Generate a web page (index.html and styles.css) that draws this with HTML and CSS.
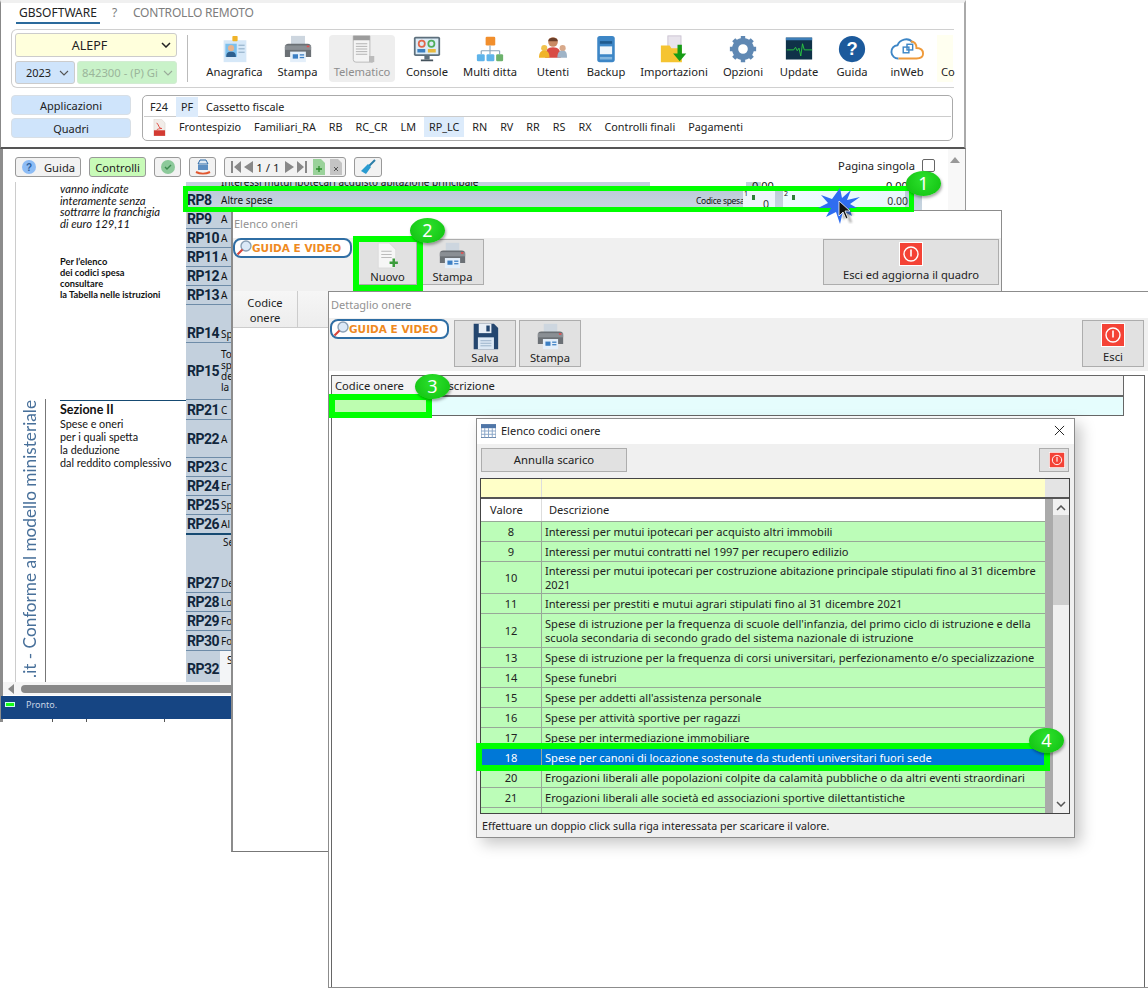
FILE: index.html
```html
<!DOCTYPE html>
<html lang="it">
<head>
<meta charset="utf-8">
<title>GBsoftware - Quadro RP</title>
<link rel="stylesheet" href="styles.css">
</head>
<body>
<svg class="defs" width="0" height="0" aria-hidden="true">
  <symbol id="i-printer" viewBox="0 0 32 32">
    <rect x="8" y="1" width="16" height="10" fill="#cdd6df"/>
    <path d="M1 14a4 4 0 0 1 4-4h22a4 4 0 0 1 4 4v11H1z" fill="#6b7075"/>
    <rect x="1" y="12" width="30" height="5" fill="#8a8f94"/>
    <rect x="26" y="12" width="3" height="2" fill="#e05050"/>
    <rect x="7" y="19" width="18" height="12" fill="#e4effa"/>
    <rect x="10" y="22" width="6" height="5" fill="#3b7fc4"/>
    <rect x="18" y="22" width="5" height="1.5" fill="#3b7fc4"/>
    <rect x="18" y="25" width="5" height="1.5" fill="#3b7fc4"/>
  </symbol>
  <symbol id="i-exit" viewBox="0 0 24 24">
    <rect x="0.5" y="0.5" width="23" height="23" fill="#f44336" stroke="#fff"/>
    <circle cx="12" cy="12" r="7" fill="none" stroke="#fff" stroke-width="1.4"/>
    <rect x="11.2" y="7.5" width="1.6" height="7" fill="#fff"/>
  </symbol>
  <symbol id="i-loupe" viewBox="0 0 16 16">
    <circle cx="10" cy="6" r="5" fill="#dbe9f7" stroke="#8aa0b5" stroke-width="1.4"/>
    <path d="M6.5 9.5 1.5 14.5" stroke="#d9453a" stroke-width="2.2"/>
  </symbol>
</svg>

<section class="app">
  <nav class="menu">
    <span class="menu-item active">GBSOFTWARE</span>
    <span class="menu-item muted">?</span>
    <span class="menu-item muted">CONTROLLO REMOTO</span>
  </nav>
  <div class="ribbon">
    <div class="pickers">
      <div class="select yellow"><span class="select-text">ALEPF</span><svg class="chev" viewBox="0 0 10 6"><path d="M1 1l4 4 4-4" fill="none" stroke="#222" stroke-width="1.5"/></svg></div>
      <div class="picker-row">
        <div class="select blue"><span class="select-text">2023</span><svg class="chev" viewBox="0 0 10 6"><path d="M1 1l4 4 4-4" fill="none" stroke="#555" stroke-width="1.1"/></svg></div>
        <div class="select green"><span class="select-text">842300 - (P) Gi</span><svg class="chev" viewBox="0 0 10 6"><path d="M1 1l4 4 4-4" fill="none" stroke="#9a9" stroke-width="1.1"/></svg></div>
      </div>
    </div>
    <div class="tools">
      <div class="tool">
        <svg viewBox="0 0 32 32"><rect x="3" y="6" width="26" height="25" fill="#d6e8f8"/><rect x="13" y="1" width="6" height="6" rx="1" fill="#f0b429"/><rect x="5" y="10" width="13" height="15" fill="#7cc0ee"/><circle cx="11.500" cy="15" r="3.500" fill="#e7b48f"/><path d="M6 25c0-5 2-6 5.500-6s5.500 1 5.500 6z" fill="#2d5f8f"/><rect x="20" y="11" width="7" height="1.500" fill="#9db8d0"/><rect x="20" y="15" width="7" height="1.500" fill="#9db8d0"/><rect x="20" y="19" width="7" height="1.500" fill="#9db8d0"/></svg>
        <span>Anagrafica</span>
      </div>
      <div class="tool"><svg viewBox="0 0 32 32"><use href="#i-printer"/></svg><span>Stampa</span></div>
      <div class="tool disabled">
        <svg viewBox="0 0 32 32"><path d="M6 1h19v27a3 3 0 0 0 3 3H9a3 3 0 0 1-3-3z" fill="#f4f4f4" stroke="#b5b5b5"/><rect x="6" y="1" width="19" height="5" fill="#9c9c9c"/><path d="M9 10h13M9 13h13M9 16h13M9 19h13M9 22h13" stroke="#aaa"/><rect x="24" y="24" width="6" height="7" fill="#bbb"/></svg>
        <span>Telematico</span>
      </div>
      <div class="tool">
        <svg viewBox="0 0 32 32"><rect x="1" y="2" width="30" height="22" rx="2" fill="#5d6f7c"/><rect x="3" y="4" width="26" height="18" fill="#dcecf7"/><circle cx="10" cy="10" r="3.500" fill="none" stroke="#e2684c" stroke-width="2"/><circle cx="21" cy="10" r="3.500" fill="none" stroke="#4fae5b" stroke-width="2"/><rect x="5" y="16" width="9" height="4" fill="#3c80c0"/><rect x="17" y="16" width="9" height="4" fill="#e9b93d"/><rect x="13" y="24" width="6" height="4" fill="#5d6f7c"/><rect x="9" y="28" width="14" height="2" fill="#44525c"/></svg>
        <span>Console</span>
      </div>
      <div class="tool">
        <svg viewBox="0 0 32 32"><rect x="11" y="2" width="11" height="10" rx="1.500" fill="#f18e2c"/><path d="M16 12v6M6 18h21M6 18v4M16 18v4M27 18v4" fill="none" stroke="#8aa5bb" stroke-width="1.300"/><rect x="1" y="22" width="9" height="8" rx="1.500" fill="#5fb4ea"/><rect x="12" y="22" width="9" height="8" rx="1.500" fill="#5fb4ea"/><rect x="23" y="22" width="8" height="8" rx="1.500" fill="#6cb26c"/></svg>
        <span>Multi ditta</span>
      </div>
      <div class="tool">
        <svg viewBox="0 0 32 32"><circle cx="16" cy="8" r="5.500" fill="#c98a63"/><path d="M10.500 7c0-5 11-5 11 0z" fill="#6b3f2a"/><path d="M7 26c0-9 3-12 9-12s9 3 9 12z" fill="#d84b45"/><circle cx="6" cy="15" r="3.500" fill="#f0c24b"/><path d="M0 26c0-6 2-8 6-8s6 2 6 8z" fill="#f0b429"/><circle cx="27" cy="15" r="3.500" fill="#d8a98a"/><path d="M21 26c0-6 2-8 6-8s5 2 5 8z" fill="#9fb4c7"/></svg>
        <span>Utenti</span>
      </div>
      <div class="tool">
        <svg viewBox="0 0 32 32"><rect x="6" y="1" width="20" height="30" rx="3" fill="#3d86c6"/><rect x="9" y="7" width="14" height="3" fill="#1f5a8e"/><rect x="9" y="13" width="14" height="9" fill="#f0f6fb"/><rect x="9" y="25" width="14" height="3" fill="#84b6de"/></svg>
        <span>Backup</span>
      </div>
      <div class="tool">
        <svg viewBox="0 0 32 32"><rect x="9" y="1" width="15" height="18" fill="#e8e4ec" stroke="#c8c0d0"/><path d="M1 12h10l2 3h12v16H1z" fill="#f5c431"/><path d="M20 11h5v10h5l-7.500 9-7.500-9h5z" fill="#169c16"/></svg>
        <span>Importazioni</span>
      </div>
      <div class="tool">
        <svg viewBox="0 0 32 32"><circle cx="16" cy="16" r="9" fill="none" stroke="#5f88b3" stroke-width="7"/><path d="M16 1v6M16 25v6M1 16h6M25 16h6M5.400 5.400l4.200 4.200M22.400 22.400l4.200 4.200M5.400 26.600l4.200-4.200M22.400 9.600l4.200-4.200" stroke="#5f88b3" stroke-width="5"/></svg>
        <span>Opzioni</span>
      </div>
      <div class="tool">
        <svg viewBox="0 0 32 32"><rect x="1" y="3" width="30" height="25" fill="#0f3248"/><rect x="1" y="3" width="30" height="3" fill="#3d7eb8"/><path d="M2 17h8l2-3 2 4 2-3 2 9 2-14 2 7h9" fill="none" stroke="#29c63f" stroke-width="1.100"/></svg>
        <span>Update</span>
      </div>
      <div class="tool">
        <svg viewBox="0 0 32 32"><circle cx="16" cy="16" r="15" fill="#1c5a9c"/><text x="16" y="23" class="qmark">?</text></svg>
        <span>Guida</span>
      </div>
      <div class="tool">
        <svg class="wide-ico" viewBox="0 0 36 28"><path d="M9 24a7 7 0 0 1-1-14C10 4 19 1 24 7" fill="none" stroke="#3d86c6" stroke-width="2"/><path d="M22 6c4 0 6 3 6 7 4 0 7 2 7 6s-3 5-7 5H9" fill="none" stroke="#ef9a3a" stroke-width="2"/><rect x="14" y="12" width="6" height="6" fill="none" stroke="#3d86c6" stroke-width="1.500"/><rect x="18" y="9" width="6" height="6" fill="none" stroke="#3d86c6" stroke-width="1.500"/></svg>
        <span>inWeb</span>
      </div>
      <div class="tool clipped"><span>Co</span></div>
    </div>
  </div>
  <div class="nav-band">
    <div class="side-buttons">
      <div class="side-btn">Applicazioni</div>
      <div class="side-btn">Quadri</div>
    </div>
    <div class="tabs">
      <div class="tab-row top">
        <span class="tab">F24</span>
        <span class="tab on">PF</span>
        <span class="tab">Cassetto fiscale</span>
      </div>
      <div class="tab-row">
        <svg class="pdf" viewBox="0 0 14 18"><path d="M1 0h8l4 4v14H1z" fill="#f1ece8" stroke="#d5ccc6" stroke-width=".5"/><path d="M4 4c3 3 2 6 5 6s-5 0-5 2" fill="none" stroke="#e0433a"/><rect x="1" y="12" width="12" height="6" fill="#d33b32"/></svg>
        <span class="tab">Frontespizio</span>
        <span class="tab">Familiari_RA</span>
        <span class="tab">RB</span>
        <span class="tab">RC_CR</span>
        <span class="tab">LM</span>
        <span class="tab on">RP_LC</span>
        <span class="tab">RN</span>
        <span class="tab">RV</span>
        <span class="tab">RR</span>
        <span class="tab">RS</span>
        <span class="tab">RX</span>
        <span class="tab">Controlli finali</span>
        <span class="tab">Pagamenti</span>
      </div>
    </div>
  </div>
</section>

<section class="doc">
  <div class="doc-bar">
    <div class="btn guida"><svg class="ico16" viewBox="0 0 16 16"><circle cx="8" cy="8" r="7" fill="#8dbcf5"/><text x="8" y="11.500" class="qmark small">?</text></svg>Guida</div>
    <div class="btn controlli">Controlli</div>
    <div class="btn icon-btn"><svg class="ico16" viewBox="0 0 16 16"><circle cx="8" cy="8" r="7" fill="#8cc99a"/><path d="M5 8l2 2 4-4" fill="none" stroke="#3c8a4f" stroke-width="1.400"/></svg></div>
    <div class="btn icon-btn"><svg class="ico16" viewBox="0 0 16 16"><path d="M5 1h6l2 4H3z" fill="#dfe9f3" stroke="#2d6aa8"/><path d="M3 6h10v5H3z" fill="#5d8fc2"/><path d="M1 13c4 2 10 2 14 0" fill="none" stroke="#e2582f" stroke-width="2"/></svg></div>
    <div class="btn pager">
      <svg class="pg" viewBox="0 0 12 14"><path d="M1 1h2v12H1zM11 1v12L4 7z" fill="#888"/></svg>
      <svg class="pg" viewBox="0 0 12 14"><path d="M11 1v12L2 7z" fill="#888"/></svg>
      <span class="pg-text">1 / 1</span>
      <svg class="pg" viewBox="0 0 12 14"><path d="M1 1v12l9-6z" fill="#888"/></svg>
      <svg class="pg" viewBox="0 0 12 14"><path d="M9 1h2v12H9zM1 1v12l7-6z" fill="#888"/></svg>
      <svg class="pg doc-ico" viewBox="0 0 12 16"><path d="M0 0h8l4 4v12H0z" fill="#9ad29a"/><path d="M6 7v6M3 10h6" stroke="#2c8a2c" stroke-width="1.300"/></svg>
      <svg class="pg doc-ico" viewBox="0 0 12 16"><path d="M0 0h8l4 4v12H0z" fill="#c4c4c4"/><path d="M4 8l4 4M8 8l-4 4" stroke="#555"/></svg>
    </div>
    <div class="btn icon-btn wide"><svg class="ico16" viewBox="0 0 16 16"><path d="M15 1 8 8" stroke="#2a7ea8" stroke-width="2"/><path d="M8 5l3 3-5 7-5-3z" fill="#2a9bd0"/></svg></div>
    <label class="single">Pagina singola<span class="checkbox"></span></label>
  </div>

  <div class="sheet">
    <div class="rail"></div>
    <div class="spine">
      <div class="spine-top"></div>
      <div class="spine-low"><span class="vert">.it - Conforme al modello ministeriale</span></div>
    </div>
    <div class="notes">
      <p class="note italic">vanno indicate<br>interamente senza<br>sottrarre la franchigia<br>di euro 129,11</p>
      <p class="note tight">Per l’elenco<br>dei codici spesa<br>consultare<br>la Tabella nelle istruzioni</p>
      <div class="section2">
        <strong>Sezione II</strong>
        <p>Spese e oneri<br>per i quali spetta<br>la deduzione<br>dal reddito complessivo</p>
      </div>
    </div>
    <div class="codes">
      <div class="rp h7 rp7"><span class="rp-cut">Interessi mutui ipotecari acquisto abitazione principale</span><span class="cut-num n1">0.00</span><span class="cut-num n2">0.00</span></div>
      <div class="rp h21 rp8">
        <b>RP8</b><span class="lbl">Altre spese</span>
        <span class="cs">Codice spesa</span>
        <span class="fld f1"><i>1</i><u></u><em>0</em></span>
        <span class="fld f2"><i>2</i><u></u><em>0.00</em></span>
      </div>
      <div class="rp h19"><b>RP9</b><span class="lbl">A</span></div>
      <div class="rp h19"><b>RP10</b><span class="lbl">A</span></div>
      <div class="rp h19"><b>RP11</b><span class="lbl">A</span></div>
      <div class="rp h19"><b>RP12</b><span class="lbl">A</span></div>
      <div class="rp h19"><b>RP13</b><span class="lbl">A</span></div>
      <div class="rp h38 low"><b>RP14</b><span class="lbl">Sp</span></div>
      <div class="rp h57"><b>RP15</b><span class="lbl multi">To<br>sp<br>de<br>la</span></div>
      <div class="rp h20"><b>RP21</b><span class="lbl">C</span></div>
      <div class="rp h38"><b>RP22</b><span class="lbl">A</span></div>
      <div class="rp h19"><b>RP23</b><span class="lbl">C</span></div>
      <div class="rp h19"><b>RP24</b><span class="lbl">Er</span></div>
      <div class="rp h19"><b>RP25</b><span class="lbl">Sp</span></div>
      <div class="rp h20 thick"><b>RP26</b><span class="lbl">Al</span></div>
      <div class="rp h39 plain"><span class="se">Se</span></div>
      <div class="rp h19"><b>RP27</b><span class="lbl">De</span></div>
      <div class="rp h19"><b>RP28</b><span class="lbl">Lo</span></div>
      <div class="rp h19"><b>RP29</b><span class="lbl">Fo</span></div>
      <div class="rp h20"><b>RP30</b><span class="lbl">Fo</span></div>
      <div class="rp h31 plain rp32"><b>RP32</b><span class="rp32-box">S</span></div>
    </div>
  </div>

  <div class="hscroll">
    <svg class="left-arrow" viewBox="0 0 6 10"><path d="M0 5l6-5v10z" fill="#888"/></svg>
    <div class="thumb"></div>
  </div>
  <div class="status"><span class="led"></span>Pronto.</div>
  <div class="ticks"><span></span><span></span><span></span></div>
  <div class="vscroll"><svg viewBox="0 0 10 6"><path d="M5 0l5 6H0z" fill="#999"/></svg></div>
</section>

<section class="win win-a">
  <header class="win-title muted-title">Elenco oneri</header>
  <div class="win-bar">
    <div class="video"><svg viewBox="0 0 16 16"><use href="#i-loupe"/></svg>GUIDA E VIDEO</div>
    <div class="big-btn nuovo">
      <svg viewBox="0 0 26 26"><path d="M4 1h11l6 6v18H4z" fill="#f6f6f6" stroke="#dcdcdc"/><path d="M7 9h10M7 12h10M7 15h10" stroke="#bbb"/><path d="M19 16v8M15 20h8" stroke="#3b9c3b" stroke-width="2.400"/></svg>
      <span>Nuovo</span>
    </div>
    <div class="big-btn"><svg viewBox="0 0 32 32"><use href="#i-printer"/></svg><span>Stampa</span></div>
    <div class="big-btn esci-wide"><svg class="exit" viewBox="0 0 24 24"><use href="#i-exit"/></svg><span>Esci ed aggiorna il quadro</span></div>
  </div>
  <div class="a-head">
    <div class="a-col1">Codice<br>onere</div>
    <div class="a-col2"></div>
  </div>
</section>

<section class="win win-b">
  <header class="win-title muted-title">Dettaglio onere</header>
  <div class="win-bar bar-b">
    <div class="video"><svg viewBox="0 0 16 16"><use href="#i-loupe"/></svg>GUIDA E VIDEO</div>
    <div class="big-btn">
      <svg viewBox="0 0 32 32"><path d="M2 1h24l5 5v25H2z" fill="#24466f"/><rect x="8" y="1" width="15" height="11" fill="#e8eef5"/><rect x="17" y="3" width="4" height="7" fill="#24466f"/><rect x="7" y="17" width="19" height="14" fill="#dce8f4"/><path d="M10 21h13M10 24h13M10 27h13" stroke="#8fa8c2"/></svg>
      <span>Salva</span>
    </div>
    <div class="big-btn"><svg viewBox="0 0 32 32"><use href="#i-printer"/></svg><span>Stampa</span></div>
    <div class="big-btn esci-small"><svg class="exit" viewBox="0 0 24 24"><use href="#i-exit"/></svg><span>Esci</span></div>
  </div>
  <div class="b-frame">
    <div class="b-table">
      <div class="b-head"><span class="b-c1">Codice onere</span><span>Descrizione</span></div>
      <div class="b-row"><span class="b-cell"></span></div>
    </div>
  </div>
</section>

<section class="win win-c">
  <header class="win-title dark-title">
    <svg class="cal" viewBox="0 0 16 14"><rect width="16" height="14" fill="#fff" stroke="#5f7fa8"/><rect width="16" height="4" fill="#4f76a8"/><path d="M0 7h16M0 10.500h16M4 4v10M8 4v10M12 4v10" stroke="#86a3c6"/></svg>
    <span>Elenco codici onere</span>
    <svg class="close" viewBox="0 0 12 12"><path d="M1 1l10 10M11 1 1 11" stroke="#111" stroke-width="1"/></svg>
  </header>
  <div class="c-body">
    <div class="c-tools">
      <div class="c-annulla">Annulla scarico</div>
      <div class="c-exit"><svg viewBox="0 0 24 24"><use href="#i-exit"/></svg></div>
    </div>
    <div class="c-table">
      <div class="c-filter"><span class="c-f1"></span><span class="c-f2"></span><span class="c-f3"></span></div>
      <div class="c-main">
        <div class="c-rows">
          <div class="c-row c-top"><span>Valore</span><span class="indent">Descrizione</span></div>
          <div class="c-row"><span>8</span><span>Interessi per mutui ipotecari per acquisto altri immobili</span></div>
          <div class="c-row"><span>9</span><span>Interessi per mutui contratti nel 1997 per recupero edilizio</span></div>
          <div class="c-row two short"><span>10</span><span>Interessi per mutui ipotecari per costruzione abitazione principale stipulati fino al 31 dicembre 2021</span></div>
          <div class="c-row"><span>11</span><span>Interessi per prestiti e mutui agrari stipulati fino al 31 dicembre 2021</span></div>
          <div class="c-row two"><span>12</span><span>Spese di istruzione per la frequenza di scuole dell'infanzia, del primo ciclo di istruzione e della scuola secondaria di secondo grado del sistema nazionale di istruzione</span></div>
          <div class="c-row"><span>13</span><span>Spese di istruzione per la frequenza di corsi universitari, perfezionamento e/o specializzazione</span></div>
          <div class="c-row"><span>14</span><span>Spese funebri</span></div>
          <div class="c-row"><span>15</span><span>Spese per addetti all'assistenza personale</span></div>
          <div class="c-row"><span>16</span><span>Spese per attività sportive per ragazzi</span></div>
          <div class="c-row"><span>17</span><span>Spese per intermediazione immobiliare</span></div>
          <div class="c-row sel"><span>18</span><span>Spese per canoni di locazione sostenute da studenti universitari fuori sede</span></div>
          <div class="c-row"><span>20</span><span>Erogazioni liberali alle popolazioni colpite da calamità pubbliche o da altri eventi straordinari</span></div>
          <div class="c-row"><span>21</span><span>Erogazioni liberali alle società ed associazioni sportive dilettantistiche</span></div>
          <div class="c-row"><span></span><span></span></div>
        </div>
        <div class="c-gutter"></div>
        <div class="c-scroll">
          <svg viewBox="0 0 10 6"><path d="M1 5l4-4 4 4" fill="none" stroke="#555" stroke-width="1.500"/></svg>
          <div class="c-thumb"></div>
          <svg viewBox="0 0 10 6"><path d="M1 1l4 4 4-4" fill="none" stroke="#555" stroke-width="1.500"/></svg>
        </div>
      </div>
    </div>
    <p class="c-foot">Effettuare un doppio click sulla riga interessata per scaricare il valore.</p>
  </div>
</section>

<div class="mark m1"></div>
<div class="mark m2"></div>
<div class="mark m3"></div>
<div class="mark m4"></div>
<div class="badge b1">1</div>
<div class="badge b2">2</div>
<div class="badge b3">3</div>
<div class="badge b4">4</div>

<svg class="burst" viewBox="0 0 44 36">
  <defs><filter id="soft"><feGaussianBlur stdDeviation="1.200"/></filter></defs>
  <path d="M22 0l2 10 9-8-4 10 13-3-10 7 7 4-8 0 3 8-9-5-3 13-4-12-10 5 5-9-13 0 10-5-7-8 11 4z" fill="#2f6df0"/>
  <path d="M23 15v15l4-4 3 7 2-1-3-7h5z" fill="#333" opacity=".45" filter="url(#soft)" transform="translate(2 2)"/>
  <path d="M21 13v15l4-4 3 7 2-1-3-7h5z" fill="#111" stroke="#fff" stroke-width=".8"/>
</svg>
</body>
</html>
```
FILE: styles.css
```css
* { box-sizing: border-box; }
html, body { margin: 0; padding: 0; }
body {
  position: relative;
  width: 1148px;
  height: 990px;
  overflow: hidden;
  background: #fff;
  font-family: "Noto Sans", "Liberation Sans", sans-serif;
  font-size: 11px;
  color: #222;
}
.defs { position: absolute; }
p { margin: 0; }
svg { display: block; flex: none; }

/* ---- top application window ---- */
.app {
  position: absolute;
  left: 0; top: 0;
  width: 966px; height: 149px;
  padding: 1px 0 0 10px;
  background: #fff;
  border-top: 3px solid #f0f0f0;
  border-left: 1px solid #888;
  border-right: 2px solid #aaa;
  border-bottom: 2px solid #555;
}
.menu { display: flex; height: 20px; margin: 0 0 5px 5px; font-size: 12px; }
.menu-item { padding: 0 3px; line-height: 18px; margin-right: 10px; }
.menu-item.active { border-bottom: 2px solid #2b6a9c; margin-right: 9px; }
.menu-item.muted { color: #7d7d7d; letter-spacing: -0.2px; }

.ribbon {
  display: flex;
  align-items: center;
  height: 59px;
  width: 943px;
  border-top: 1px solid #d0d0d0;
  border-bottom: 1px solid #d0d0d0;
  border-left: 1px solid #ccc;
  border-radius: 6px 0 0 6px;
  padding-left: 3px;
}
.pickers { width: 162px; display: flex; flex-direction: column; gap: 4px; }
.picker-row { display: flex; gap: 2px; }
.select {
  display: flex; align-items: center;
  height: 23px; border: 1px solid #ccc; border-radius: 3px; padding: 0 5px;
}
.select-text { flex: 1; text-align: center; white-space: nowrap; }
.select.yellow { height: 24px; background: #ffffdc; border-color: #ccc; }
.select.yellow .select-text { font-size: 12.500px; }
.select.blue { width: 60px; background: #cfe4fb; }
.select.green { width: 100px; background: #c9f2c9; color: #9bb59b; border-color: #d2ecd2; padding: 0 3px 0 4px; }
.select.green .select-text { text-align: left; font-size: 11.300px; }
.chev { width: 10px; height: 6px; margin-left: 3px; }

.tools {
  display: grid;
  grid-template-columns: 63px 63px 66px 64px 62px 64px 42px 94px 44px 68px 38px 72px 10px;
  height: 47px;
  margin-left: 10px;
  padding-left: 15px;
  border-left: 1px solid #bbb;
  width: 766px;
}
.tool {
  display: flex; flex-direction: column; align-items: center;
  justify-content: space-between;
  white-space: nowrap;
  font-size: 11.200px;
  padding-bottom: 3px;
}
.tool svg { width: 28px; height: 28px; }
.tool svg.wide-ico { width: 34px; }
.tool.disabled { background: #eeeeee; border-radius: 4px; color: #8d8d8d; }
.tool.clipped {
  align-items: flex-start; justify-content: flex-end;
  background: #fffff0; margin-left: -6px; width: 16px; padding-left: 4px;
}

.nav-band { display: flex; gap: 11px; margin-top: 7px; }
.side-buttons { width: 120px; display: flex; flex-direction: column; gap: 3px; }
.side-btn {
  height: 20px; line-height: 20px; text-align: center;
  background: #cfe4fb; border: 1px solid #d8dfe6; border-radius: 4px;
}
.tabs {
  width: 811px; height: 46px;
  border: 1px solid #aaa; border-radius: 5px;
  padding: 2px 2px 0;
  font-size: 10.800px;
}
.tab-row { display: flex; align-items: center; height: 20px; padding-left: 3px; }
.tab-row.top { height: 19px; border-bottom: 1px solid #ccc; margin: 0 -1px; padding-left: 1px; }
.tab { padding: 0 5px; line-height: 20px; margin-right: 3px; white-space: nowrap; }
.tab.on { background: #dcebfb; }
.pdf { width: 13px; height: 17px; margin: 0 8px 0 5px; }

/* ---- form document ---- */
.doc {
  position: absolute;
  left: 0; top: 149px;
  width: 966px; height: 573px;
  background: #fff;
  border-left: 3px solid #8c8c8c;
  border-right: 1px solid #999;
  display: flex; flex-direction: column;
}
.doc-bar {
  display: flex; align-items: center; gap: 8px;
  height: 33px; padding: 3px 0 0 12px;
  position: relative;
}
.btn {
  display: flex; align-items: center; justify-content: center; gap: 7px;
  height: 20px; border: 1px solid #999; border-radius: 3px;
  background: #f2f2f2; font-size: 11.200px; flex: none;
}
.guida { width: 66px; }
.controlli { width: 57px; background: #c8fbb8; }
.icon-btn { width: 27px; }
.icon-btn.wide { width: 28px; }
.ico16 { width: 16px; height: 16px; }
.pager { width: 122px; gap: 0; justify-content: flex-start; padding-left: 5px; }
.pg { width: 12px; height: 14px; }
.pg-text { margin: 0 3px 0 1px; white-space: nowrap; width: 26px; text-align: center; font-size: 11.500px; }
.doc-ico { height: 16px; margin-left: 5px; }
.single {
  position: absolute; right: 30px; top: 9px;
  display: flex; align-items: center;
  font-size: 11.200px;
}
.checkbox {
  width: 13px; height: 13px; border: 1px solid #666; border-radius: 2px; margin-left: 7px; background: #fff;
}
.vscroll {
  position: absolute; left: 945px; top: 0; width: 17px; height: 61px;
  background: #f8f8f8; padding: 8px 0 0 2px;
}
.vscroll svg { width: 10px; height: 6px; }

.sheet { display: flex; height: 500px; overflow: hidden; position: relative; flex: none; }
.rail { width: 13px; border-right: 1px solid #ccc; flex: none; }
.spine { width: 30px; flex: none; display: flex; flex-direction: column; }
.spine-top { height: 217px; }
.spine-low {
  flex: 1; border-right: 1px solid #777; position: relative; overflow: hidden;
}
.vert {
  position: absolute; left: 5px; top: 1px;
  writing-mode: vertical-rl; transform: rotate(180deg);
  white-space: nowrap;
  font-family: "Lato", "Noto Sans", sans-serif;
  font-size: 17.200px; line-height: 18px; color: #48709a;
}
.notes {
  width: 140px; flex: none; padding: 1px 0 0 14px;
  font-family: "Lato", "Noto Sans", sans-serif;
  color: #111;
}
.note { font-size: 10px; line-height: 11px; }
.note.italic { font-style: italic; font-size: 11.300px; line-height: 11.500px; white-space: nowrap; }
.note.tight {
  margin-top: 27px; font-weight: 700; font-size: 9.300px; line-height: 11px; white-space: nowrap;
}
.section2 {
  margin: 100px 0 0 0;
  border-top: 1px solid #164a72;
  padding-top: 2px;
  font-size: 10.800px; line-height: 13px;
  width: 126px;
}
.section2 strong { font-size: 12.500px; display: block; line-height: 14px; }

.codes { width: 736px; flex: none; display: flex; flex-direction: column; background: #c3d0dd; }
.rp {
  display: flex; align-items: center; flex: none;
  position: relative;
  border-bottom: 1px solid #6e8ca8;
  padding-left: 1px;
  font-size: 10px; color: #111;
}
.rp b {
  width: 34px;
  font-family: "Roboto", "Liberation Sans", sans-serif;
  font-size: 14px; letter-spacing: -0.5px; color: #10263c;
}
.lbl { white-space: nowrap; }
.multi { line-height: 11px; }
.h7 { height: 7px; } .h19 { height: 19px; } .h20 { height: 20px; } .h21 { height: 21px; }
.h31 { height: 31px; } .h38 { height: 38px; } .h39 { height: 39px; } .h57 { height: 57px; }
.low { align-items: flex-end; padding-bottom: 1px; }
.thick { border-bottom: 2px solid #164a72; }
.plain { border-bottom: 0; }
.rp32 { padding-top: 5px; }
.rp7 {
  border: 0; overflow: hidden; align-items: flex-end;
  background: linear-gradient(to right, #c3d0dd 464px, #fff 464px, #fff 560px, #c3d0dd 560px, #c3d0dd 575px, #fff 575px);
}
.rp-cut { position: absolute; left: 35px; bottom: 2px; line-height: 9px; font-size: 10px; white-space: nowrap; }
.cut-num { position: absolute; bottom: -1px; font-size: 11px; line-height: 9px; }
.n1 { left: 566px; } .n2 { left: 700px; }
.rp8 { background: linear-gradient(to bottom, #bccbd9, #c8d5e0); border: 0; }
.cs {
  position: absolute; left: 510px; top: 6px; font-size: 8.500px;
  letter-spacing: -0.3px;
}
.fld { position: absolute; top: 2px; height: 17px; background: #eef5fb; }
.fld i { position: absolute; left: 1px; top: -2px; font-style: normal; font-size: 7px; }
.fld u { position: absolute; left: 9px; top: 4px; width: 3px; height: 5px; background: #2f7f3a; }
.fld em { position: absolute; font-style: normal; font-size: 10.500px; bottom: -3px; color: #333; }
.f1 { left: 557px; width: 32px; }
.f1 em { left: 20px; }
.f2 { left: 597px; width: 122px; background: linear-gradient(to right, #eefcff, #e8f6fb); }
.f2 em { right: -3px; bottom: 0; }
.se { position: absolute; left: 37px; top: 0; }
.rp32-box {
  align-self: stretch; background: #f3f5f7; width: 30px; padding: 2px 0 0 7px; margin: -5px 0 0 -1px;
}

.hscroll {
  height: 13px; display: flex; align-items: center; background: #f5f5f5; padding-left: 5px; flex: none;
}
.left-arrow { width: 6px; height: 10px; }
.thumb { width: 300px; height: 8px; margin-left: 7px; border-radius: 4px; background: #888; }
.status {
  display: flex; align-items: center; flex: none;
  height: 23px; margin-left: -2px; margin-top: 1px;
  padding-left: 4px; padding-bottom: 6px;
  background: #164583; color: #c8d4e4; font-size: 9px;
}
.led { width: 10px; height: 5px; margin-right: 11px; background: #14ff14; border: 1px solid #cfe; }
.ticks { position: relative; height: 3px; flex: none; display: flex; }
.ticks span { width: 1px; height: 3px; background: #555; margin-left: 33px; }
.ticks span:first-child { margin-left: 49px; }
.ticks span:last-child { margin-left: 77px; }

/* ---- floating windows ---- */
.win { position: absolute; display: flex; flex-direction: column; background: #fff; }
.win-title { flex: none; display: flex; align-items: center; font-size: 11px; }
.muted-title { color: #929292; }

.win-a {
  left: 231px; top: 210px; width: 771px; height: 642px;
  border: 1px solid #8c8c8c; border-left-width: 2px; border-bottom-color: #777;
}
.win-a .win-title { height: 27px; padding: 0 0 3px 1px; }
.win-bar {
  flex: none; display: flex; gap: 4px; align-items: flex-start;
  height: 53px; background: #f0f0f0; padding: 0 2px 0 0;
  position: relative;
}
.video {
  display: flex; align-items: center;
  width: 119px; height: 20px; flex: none;
  border: 2px solid #2f6ea4; border-radius: 8px; background: #fff;
  color: #ef8a1f; font-weight: 700; font-size: 10.500px; padding-left: 1px; white-space: nowrap;
  font-family: "DejaVu Sans", "Liberation Sans", sans-serif;
}
.video svg { width: 16px; height: 16px; }
.big-btn {
  display: flex; flex-direction: column; align-items: center; justify-content: space-between;
  width: 63px; height: 46px; flex: none; padding: 2px 0 2px; margin-top: 1px;
  background: #e1e1e1; border: 1px solid #adadad; font-size: 11.200px;
}
.big-btn svg { width: 27px; height: 27px; }
.big-btn svg.exit { width: 24px; height: 24px; }
.nuovo { margin-left: 2px; width: 59px; }
.esci-wide { width: 176px; margin-left: auto; }
.a-head { display: flex; height: 37px; width: 95px; background: linear-gradient(#f6f6f6, #ededed); border-bottom: 1px solid #ccc; }
.a-col1 { width: 65px; text-align: center; line-height: 15px; padding-top: 4px; border-right: 1px solid #ccc; font-size: 11.200px; }
.a-col2 { flex: 1; }

.win-b {
  left: 328px; top: 291px; width: 820px; height: 697px;
  border: 1px solid #8c8c8c; border-right: 0;
}
.win-b .win-title { height: 26px; padding: 0 0 2px 2px; }
.bar-b { height: 53px; gap: 3px; padding-top: 1px; }
.bar-b .video { margin: 0 2px 0 1px; }
.bar-b .big-btn { width: 62px; height: 47px; }
.esci-small { margin-left: auto; margin-right: 2px; }
.b-frame {
  margin: 4px 0 0 2px; width: 814px; flex: 1;
  border: 1px solid #666; border-bottom: 0;
}
.b-table { width: 792px; }
.b-head {
  display: flex; height: 21px; align-items: center;
  background: #f3f3f3; padding-left: 3px; font-size: 11.200px;
  border-right: 1px solid #666; border-bottom: 2px solid #666;
}
.b-c1 { width: 99px; }
.b-row { height: 19px; background: #e5fdfd; border-right: 1px solid #666; border-bottom: 1px solid #666; display: flex; }
.b-cell { width: 98px; background: #bdfdb0; }

.win-c {
  left: 476px; top: 418px; width: 599px; height: 420px;
  border: 1px solid #8c8c8c;
  box-shadow: 6px 6px 14px rgba(0,0,0,.22);
}
.dark-title { height: 25px; padding: 0 9px 2px 4px; gap: 5px; }
.dark-title span { flex: 1; font-size: 11px; }
.cal { width: 15px; height: 14px; }
.close { width: 11px; height: 11px; }
.c-body { flex: 1; background: #f0f0f0; padding: 4px 4px 0 3px; display: flex; flex-direction: column; }
.c-tools { display: flex; justify-content: space-between; height: 25px; padding: 0 1px; }
.c-annulla {
  width: 146px; height: 24px; line-height: 22px; text-align: center;
  background: #e1e1e1; border: 1px solid #adadad; font-size: 11.300px;
}
.c-exit {
  width: 30px; height: 24px; background: #e1e1e1; border: 1px solid #adadad;
  display: flex; align-items: center; justify-content: flex-end; padding-right: 3px;
}
.c-exit svg { width: 16px; height: 16px; }
.c-table {
  margin-top: 5px; height: 336px; width: 590px;
  border: 1px solid #444; display: flex; flex-direction: column; background: #fff; overflow: hidden;
}
.c-filter { display: flex; height: 20px; flex: none; border-bottom: 2px solid #555; }
.c-f1 { width: 61px; background: #ffffc8; border-right: 1px solid #ddd; }
.c-f2 { flex: 1; background: #ffffc8; }
.c-f3 { width: 24px; background: #e4e4e4; }
.c-main { display: flex; flex: 1; min-height: 0; }
.c-rows { flex: 1; overflow: hidden; min-width: 0; }
.c-row {
  display: grid; grid-template-columns: 61px 1fr; min-height: 20px;
  background: #bcfdb8; border-bottom: 1px solid #98a898; font-size: 11.100px; line-height: 14px;
}
.c-row span { display: flex; align-items: center; padding: 0 2px; border-left: 1px solid transparent; }
.c-row span:first-child { justify-content: center; border-right: 1px solid #98a898; border-left: 0; padding: 0; }
.c-row.two { min-height: 34px; }
.c-row.two.short { min-height: 32px; }
.c-top { background: #fff; min-height: 23px; }
.c-top span:first-child { border-right-color: #ddd; justify-content: flex-start; padding-left: 9px; }
.indent { padding-left: 6px !important; }
.c-row.sel { background: #0078d7; color: #fff; }
.c-gutter { width: 8px; background: #aaa; flex: none; }
.c-scroll {
  width: 16px; flex: none; background: #f0f0f0;
  display: flex; flex-direction: column; align-items: center; justify-content: space-between; padding: 6px 0;
  position: relative;
}
.c-scroll svg { width: 10px; height: 6px; }
.c-thumb { position: absolute; top: 16px; left: 0; width: 16px; height: 90px; background: #cdcdcd; }
.c-foot { margin: 5px 0 0 2px; font-size: 10.700px; }

/* ---- tutorial annotations ---- */
.mark { position: absolute; border: 6px solid #00ff00; }
.m1 { left: 183px; top: 186px; width: 731px; height: 26px; border-width: 5px; }
.m2 { left: 353px; top: 236px; width: 70px; height: 55px; }
.m3 { left: 329px; top: 394px; width: 103px; height: 24px; }
.m4 { left: 476px; top: 743px; width: 574px; height: 28px; }
.badge {
  position: absolute; width: 35px; height: 25px; border-radius: 50%;
  background: radial-gradient(circle at 50% 35%, #2de02d, #0fc00f);
  color: #fff; font-size: 18px; line-height: 25px; text-align: center;
  box-shadow: 1px 2px 3px rgba(0,0,0,.35);
}
.b1 { left: 906px; top: 171px; }
.b2 { left: 410px; top: 218px; }
.b3 { left: 415px; top: 374px; }
.b4 { left: 1029px; top: 728px; }
.burst { position: absolute; left: 818px; top: 188px; width: 44px; height: 36px; }
.qmark { fill: #fff; font-weight: 700; font-size: 21px; text-anchor: middle; font-family: "Liberation Sans", sans-serif; }
.qmark.small { font-size: 10px; fill: #2d5f9c; }
```
